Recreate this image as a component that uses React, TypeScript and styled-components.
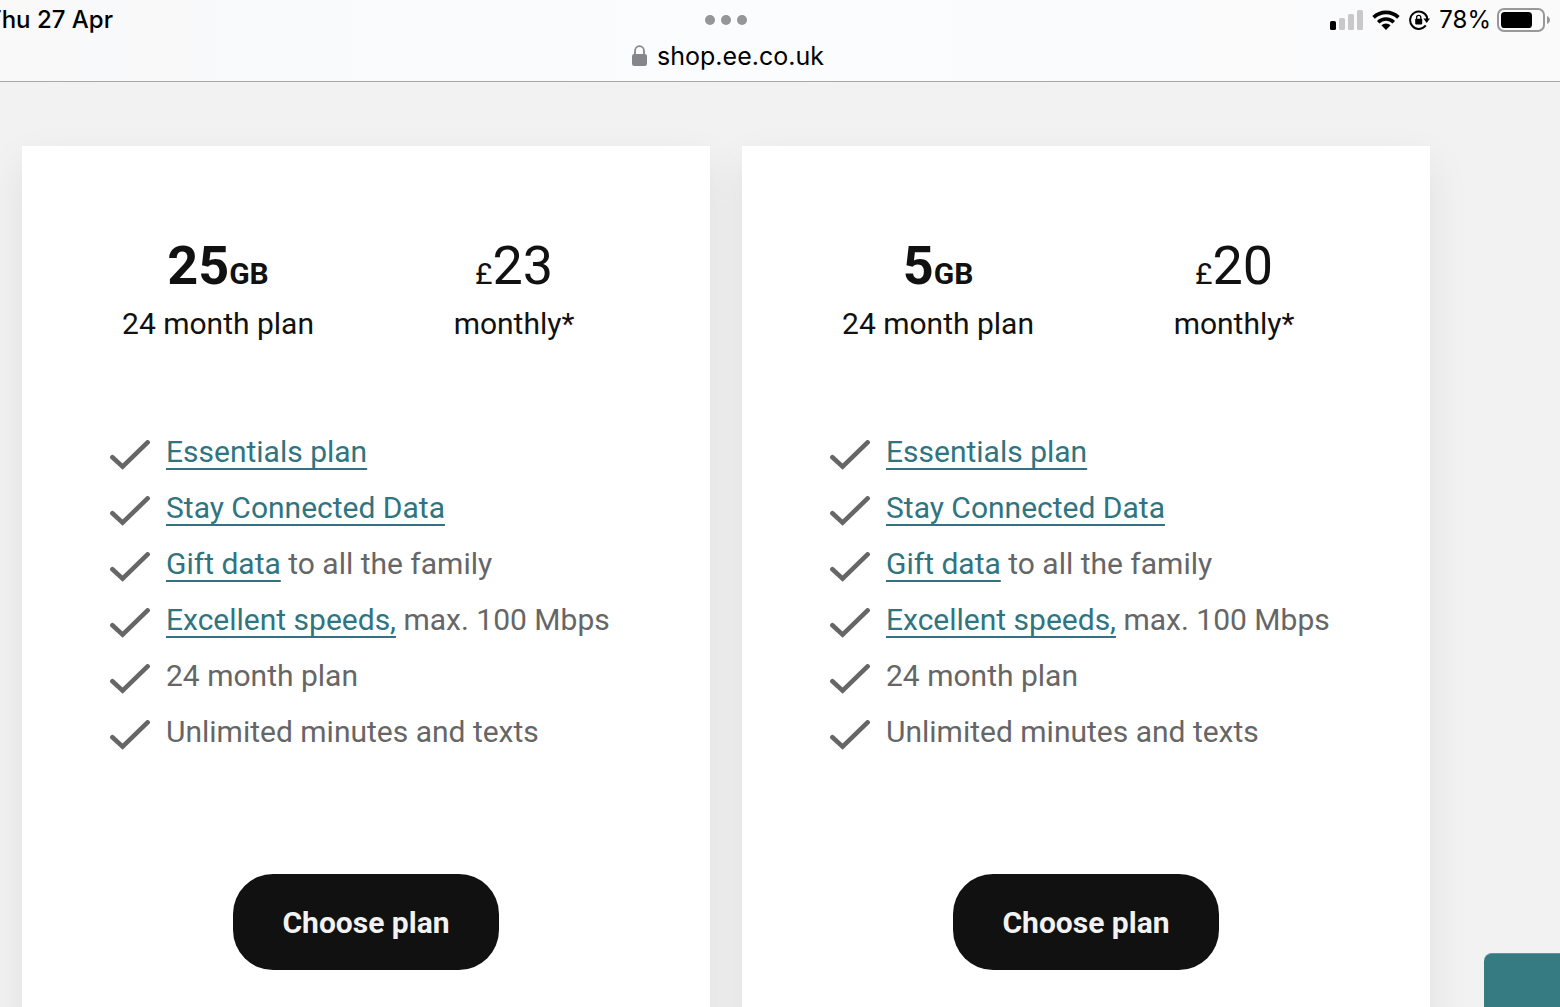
import React from 'react';
import styled, { createGlobalStyle } from 'styled-components';

const GlobalStyle = createGlobalStyle`
  *, *::before, *::after { box-sizing: border-box; }
  html, body, #root { height: 100%; }
  body {
    margin: 0;
    background: #f2f2f2;
    color: #111111;
    font-family: Roboto, "Liberation Sans", sans-serif;
    font-size: 30px;
    line-height: 56px;
    overflow: hidden;
  }
`;

const Viewport = styled.div`
  height: 100%;
  overflow: hidden;
`;

/* The left part of the screen runs off the edge of the window. */
const Screen = styled.div`
  margin-left: -108px;
`;

const BrowserBar = styled.header`
  background: linear-gradient(90deg, #f8f8f9, #fbfcfd 50%, #fafafb);
  border-bottom: 1px solid #a8a8aa;
  color: #000000;
  font-family: Inter, "Liberation Sans", sans-serif;
  font-size: 24px;
  line-height: 40px;
`;

const StatusRow = styled.div`
  display: grid;
  grid-template-columns: 1fr auto 1fr;
  align-items: center;
  height: 40px;
  padding: 0 10px 0 94px;
`;

const Today = styled.span`
  font-weight: 500;
`;

const Multitask = styled.button`
  display: flex;
  gap: 6px;
  padding: 0;
  border: 0;
  background: none;
  margin-right: 84px;
`;

const Dot = styled.span`
  width: 10px;
  height: 10px;
  border-radius: 50%;
  background: #969698;
`;

const Indicators = styled.div`
  display: flex;
  align-items: center;
  justify-content: flex-end;
  gap: 9px;
`;

const Battery = styled.span`
  display: flex;
  align-items: center;
  gap: 6px;
`;

const AddressRow = styled.div`
  display: flex;
  align-items: center;
  justify-content: center;
  gap: 10px;
  height: 41px;
  padding: 0 0 10px 4px;
  font-size: 25px;
`;

const Plans = styled.main`
  display: grid;
  grid-template-columns: 1fr 1fr;
  gap: 32px;
  padding: 64px 130px;
`;

const Card = styled.article`
  display: flex;
  flex-direction: column;
  align-items: center;
  padding: 98px 88px;
  background: #ffffff;
  box-shadow: 0 16px 40px rgba(0, 0, 0, 0.08);
`;

const Summary = styled.div`
  display: grid;
  grid-template-columns: 1fr 1fr;
  gap: 80px;
  width: 100%;
  text-align: center;
  white-space: nowrap;
`;

const Headline = styled.p<{ $bold?: boolean }>`
  margin: 0;
  font-size: 30px;
  line-height: 44px;
  font-weight: ${(p) => (p.$bold ? 700 : 400)};
`;

const Figure = styled.span`
  font-size: 54px;
`;

const Caption = styled.p`
  margin: 0;
`;

const Features = styled.ul`
  width: 100%;
  margin: 72px 0 114px;
  padding: 0;
  list-style: none;
  color: #666666;
`;

const Feature = styled.li`
  display: flex;
  align-items: center;
  gap: 16px;
  white-space: nowrap;
`;

const FeatureLink = styled.a`
  color: #2f7480;
  text-decoration: underline;
  text-decoration-thickness: 2px;
  text-underline-offset: 6px;
`;

const ChooseButton = styled.button`
  height: 96px;
  padding: 2px 49px 0;
  border: 0;
  border-radius: 40px;
  background: #111111;
  color: #f2f2f2;
  font: inherit;
  font-weight: 700;
`;

const ChatTab = styled.button`
  position: fixed;
  right: 0;
  bottom: 0;
  width: 76px;
  height: 54px;
  padding: 0;
  border: 0;
  border-top: 1px solid #5b979d;
  border-radius: 8px 0 0 0;
  background: #367a82;
`;

const SignalIcon = () => (
  <svg width="33" height="20" viewBox="0 0 33 20" aria-hidden="true">
    <rect x="0" y="11" width="6" height="9" rx="1.6" fill="#000" />
    <rect x="9" y="8" width="6" height="12" rx="1.6" fill="#c8c8ca" />
    <rect x="18" y="4" width="6" height="16" rx="1.6" fill="#c8c8ca" />
    <rect x="27" y="0" width="6" height="20" rx="1.6" fill="#c8c8ca" />
  </svg>
);

const WifiIcon = () => (
  <svg width="28" height="20" viewBox="0 0 28 20" aria-hidden="true">
    <g fill="none" stroke="#000" strokeWidth="3.6">
      <path d="M1.6 7.4a17.8 17.8 0 0 1 24.8 0" />
      <path d="M6.2 12.2a11.2 11.2 0 0 1 15.6 0" />
    </g>
    <path d="M9.4 15.3a6.7 6.7 0 0 1 9.2 0L14 20z" fill="#000" />
  </svg>
);

const RotationLockIcon = () => (
  <svg width="21" height="20" viewBox="0 0 21 20" aria-hidden="true">
    <path d="M16.8 15.4A8.7 8.7 0 1 1 18 7.2V10" fill="none" stroke="#000" strokeWidth="2" />
    <path d="M14.4 8.4h6.6l-3.3 4.6z" fill="#000" />
    <rect x="6.2" y="8.8" width="7" height="5.6" rx="0.8" fill="#000" />
    <path d="M7.6 9V7.4a2.1 2.1 0 0 1 4.2 0V9" fill="none" stroke="#000" strokeWidth="1.3" />
  </svg>
);

const BatteryIcon = () => (
  <svg width="53" height="24" viewBox="0 0 53 24" aria-hidden="true">
    <rect x="1" y="1" width="46" height="22" rx="6" fill="none" stroke="#98989b" strokeWidth="2" />
    <rect x="4" y="4" width="31" height="16" rx="3.6" fill="#000" />
    <path d="M50 8c2 .8 3 2.3 3 4s-1 3.2-3 4z" fill="#98989b" />
  </svg>
);

const LockIcon = () => (
  <svg width="15" height="21" viewBox="0 0 15 21" aria-hidden="true">
    <rect x="0" y="9" width="15" height="12" rx="2.2" fill="#86858b" />
    <path d="M3 10V6.2a4.5 5 0 0 1 9 0V10" fill="none" stroke="#86858b" strokeWidth="1.8" />
  </svg>
);

const TickIcon = () => (
  <svg width="40" height="30" viewBox="0 0 40 30" aria-hidden="true">
    <path
      d="M2.4 17.2L12.6 26.6L37.6 2.4"
      fill="none"
      stroke="#666"
      strokeWidth="4.6"
      strokeLinecap="round"
      strokeLinejoin="miter"
    />
  </svg>
);

const TickSlot = styled.span`
  display: flex;
  padding-top: 6px;
`;

const plans = [
  { data: 25, price: 23 },
  { data: 5, price: 20 },
];

const features = [
  { link: 'Essentials plan' },
  { link: 'Stay Connected Data' },
  { link: 'Gift data', text: ' to all the family' },
  { link: 'Excellent speeds,', text: ' max. 100 Mbps' },
  { text: '24 month plan' },
  { text: 'Unlimited minutes and texts' },
];

function PlanCard({ data, price }: { data: number; price: number }) {
  return (
    <Card>
      <Summary>
        <div>
          <Headline $bold>
            <Figure>{data}</Figure>GB
          </Headline>
          <Caption>24 month plan</Caption>
        </div>
        <div>
          <Headline>
            £<Figure>{price}</Figure>
          </Headline>
          <Caption>monthly*</Caption>
        </div>
      </Summary>
      <Features>
        {features.map(({ link, text }) => (
          <Feature key={link ?? text}>
            <TickSlot>
              <TickIcon />
            </TickSlot>
            <span>
              {link && <FeatureLink href="#details">{link}</FeatureLink>}
              {text}
            </span>
          </Feature>
        ))}
      </Features>
      <ChooseButton type="button">Choose plan</ChooseButton>
    </Card>
  );
}

export default function App() {
  return (
    <Viewport>
      <GlobalStyle />
      <Screen>
        <BrowserBar>
          <StatusRow>
            <Today>Thu 27 Apr</Today>
            <Multitask type="button" aria-label="Multitasking">
              <Dot />
              <Dot />
              <Dot />
            </Multitask>
            <Indicators>
              <SignalIcon />
              <WifiIcon />
              <RotationLockIcon />
              <Battery>
                78%
                <BatteryIcon />
              </Battery>
            </Indicators>
          </StatusRow>
          <AddressRow>
            <LockIcon />
            <span>shop.ee.co.uk</span>
          </AddressRow>
        </BrowserBar>
        <Plans>
          {plans.map((plan) => (
            <PlanCard key={plan.data} {...plan} />
          ))}
        </Plans>
      </Screen>
      <ChatTab type="button" aria-label="Chat" />
    </Viewport>
  );
}
